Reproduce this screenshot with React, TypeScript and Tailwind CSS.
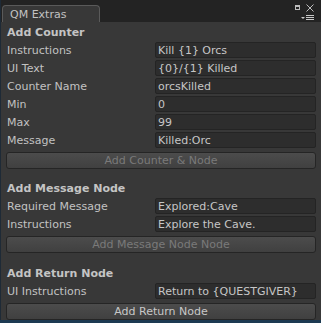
import React from 'react';

const font = { fontFamily: '"DejaVu Sans", Verdana, sans-serif' };

const Field: React.FC<{ label: string; value: string; first?: boolean }> = ({ label, value, first }) => (
  <div className={`flex items-center h-[16px] ${first ? 'mt-[2px]' : 'mt-[2px]'}`}>
    <span className="w-[150px] pl-[6px] text-[11px] text-[#c2c2c2] leading-none whitespace-nowrap">{label}</span>
    <div className="ml-auto mr-[5px] w-[161px] h-[16px] bg-[#2d2d2d] border border-[#242424] rounded-[2px] flex items-center pl-[2px] text-[11px] text-[#c6c6c6] leading-none whitespace-nowrap overflow-hidden">
      {value}
    </div>
  </div>
);

const Heading: React.FC<{ text: string; mt: string }> = ({ text, mt }) => (
  <div className={`${mt} h-[16px] flex items-center pl-[6px] text-[11px] font-bold text-[#c4c4c4] leading-none whitespace-nowrap`}>
    {text}
  </div>
);

const Btn: React.FC<{ text: string; disabled?: boolean }> = ({ text, disabled }) => (
  <div
    className={`mt-[4px] mx-[5px] h-[17px] rounded-[3px] border border-[#252525] bg-gradient-to-b from-[#4c4c4c] to-[#404040] flex items-center justify-center text-[11px] leading-none whitespace-nowrap ${
      disabled ? 'text-[#7a7a7a]' : 'text-[#c8c8c8]'
    }`}
  >
    {text}
  </div>
);

export default function App() {
  return (
    <div className="w-[321px] h-[323px] bg-[#1c3a52] overflow-hidden" style={font}>
      <div className="h-[320px] bg-[#383838] border-l border-[#1e2a36] flex flex-col">
        {/* tab bar */}
        <div className="h-[22px] bg-[#232323] relative flex items-end">
          <div className="ml-[1px] w-[98px] h-[17px] bg-[#383838] border-t border-l border-r border-[#5a5a5a] rounded-t-[4px] flex items-center pl-[7px] text-[11px] text-[#c2c2c2] leading-none">
            QM Extras
          </div>
          <div className="absolute left-[294px] top-[5px] w-[5px] h-[5px] border border-[#bdbdbd] border-t-2" />
          <svg className="absolute left-[305px] top-[4px]" width="8" height="8" viewBox="0 0 8 8">
            <path d="M0.5 0.5 L7.5 7.5 M7.5 0.5 L0.5 7.5" stroke="#bdbdbd" strokeWidth="1" />
          </svg>
          <svg className="absolute left-[300px] top-[15px]" width="14" height="6" viewBox="0 0 14 6">
            <path d="M0 2 L4 2 L2 4 Z" fill="#c8c8c8" />
            <rect x="5" y="0" width="8" height="1" fill="#c8c8c8" />
            <rect x="5" y="2" width="8" height="1" fill="#c8c8c8" />
            <rect x="5" y="4" width="8" height="1" fill="#c8c8c8" />
          </svg>
        </div>

        <Heading text="Add Counter" mt="mt-[2px]" />
        <Field label="Instructions" value="Kill {1} Orcs" first />
        <Field label="UI Text" value="{0}/{1} Killed" />
        <Field label="Counter Name" value="orcsKilled" />
        <Field label="Min" value="0" />
        <Field label="Max" value="99" />
        <Field label="Message" value="Killed:Orc" />
        <Btn text="Add Counter & Node" disabled />

        <Heading text="Add Message Node" mt="mt-[11px]" />
        <Field label="Required Message" value="Explored:Cave" first />
        <Field label="Instructions" value="Explore the Cave." />
        <Btn text="Add Message Node Node" disabled />

        <Heading text="Add Return Node" mt="mt-[12px]" />
        <Field label="UI Instructions" value="Return to {QUESTGIVER}" first />
        <Btn text="Add Return Node" />
      </div>
    </div>
  );
}
